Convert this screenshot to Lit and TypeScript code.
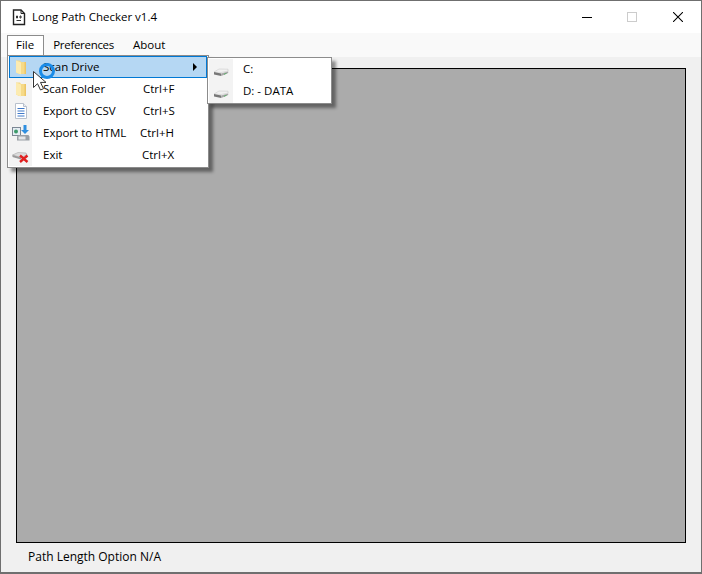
import { LitElement, html, css, svg } from "lit";
import { customElement } from "lit/decorators.js";

const folder = svg`<svg class="ic" width="16" height="16" viewBox="0 0 16 16"><path d="M3 1.500h4l1 1.500h5v12H6l-3-1.500z" fill="#f6da88"/><path d="M3 1.500l5 2V15.500l-5-2z" fill="#fcebb0"/><path d="M11.500 3H13v12h-1.500z" fill="#ecc566"/></svg>`;
const drive = svg`<svg class="ic drive" width="18" height="16" viewBox="0 0 18 16"><path d="M2 10l5-3 9 .2.200 1.800-7 1.500z" fill="#f1f1f1" stroke="#c4c4c4" stroke-width=".5"/><path d="M2 10l7.200 1.500V14L2 12.500z" fill="#777"/><path d="M9.200 11.500l7-2V11l-7 3z" fill="#a8a8a8"/><path d="M12 11.800l2.500-.8v.8l-2.500.9z" fill="#54ad62"/></svg>`;
const doc = svg`<svg class="ic" width="16" height="18" viewBox="0 0 16 18"><path d="M2.500 1.500h8l3 3v12h-11z" fill="#fff" stroke="#b8c0cc"/><path d="M10.500 1.500v3h3" fill="#e8ecf2" stroke="#b8c0cc"/><path d="M4.500 6.500h7M4.500 9h7M4.500 11.500h7M4.500 14h7" stroke="#3f78c8"/></svg>`;
const htmlIc = svg`<svg class="ic" width="18" height="18" viewBox="0 0 18 18"><rect x=".5" y="3.500" width="8" height="8" fill="#e6edf3" stroke="#7c8894"/><circle cx="4" cy="7.500" r="2" fill="#3d9a6a"/><path d="M11.500 1h3v5H17l-4 4-4-4h2.500z" fill="#2f8fe0"/><path d="M5 12.500l2-1.500h9.500l1 1.500v4H5z" fill="#9aa0a6"/><rect x="6.500" y="12.500" width="7" height="3" fill="#e4e6e8"/></svg>`;
const exitIc = svg`<svg class="ic" width="18" height="16" viewBox="0 -1 18 16"><path d="M.5 7L6 4.500l8 .5 1 2-6 2.500z" fill="#dcdcdc" stroke="#a8a8a8" stroke-width=".6"/><path d="M.5 7l8.500 2.500v2L.5 9z" fill="#9a9a9a"/><path d="M8 7.500l7.500 6.500M15.500 7.500L8 14" stroke="#e02020" stroke-width="2.400"/></svg>`;

@customElement("app-root")
export class AppRoot extends LitElement {
  static styles = css`
    :host { display: block; width: 702px; height: 574px; font: 11.5px "Open Sans", "Noto Sans", sans-serif; color: #000; }
    * { box-sizing: border-box; }
    .win { position: relative; width: 702px; height: 574px; border: 1px solid #6f6f6f; border-bottom-width: 2px; background: #f0f0f0; display: flex; flex-direction: column; overflow: hidden; }
    .title { height: 32px; background: #fff; display: flex; align-items: center; flex: none; }
    .appicon { margin-left: 11px; width: 14px; height: 17px; }
    .ttext { margin-left: 6px; flex: 1; padding-bottom: 2px; }
    .wb { width: 45px; height: 32px; display: flex; align-items: center; padding-left: 17px; }
    .wb.close { width: 46px; padding-left: 18px; }
    .menubar { height: 24px; flex: none; background: #f9f9f9; display: flex; padding-left: 6px; align-items: stretch; }
    .mi { margin-top: 2px; padding: 0 9px 4px 10px; display: flex; align-items: center; border: 1px solid transparent; border-bottom: none; }
    .mi.open { border-color: #8c8c8c; background: #fff; padding: 0 9px 4px 8px; }
    .mi.pref { padding: 0 8px 4px 8px; letter-spacing: -0.3px; }
    .mi.about { padding-left: 9px; }
    .client { flex: 1; padding: 11px 15px 0 15px; display: flex; flex-direction: column; }
    .canvas { height: 475px; background: #ababab; border: 1px solid #000; flex: none; }
    .status { font-size: 12px; padding-left: 12px; margin-top: 3px; height: 20px; display: flex; align-items: center; }
    .menu { position: absolute; background: #fff; border: 1px solid #8c8c8c; box-shadow: 4px 4px 3px rgba(0,0,0,.42); }
    .m1 { left: 6px; top: 54px; width: 202px; height: 113px; padding: 0 1px; }
    .m2 { left: 206px; top: 56px; width: 125px; height: 47px; padding: 1px; z-index: 1; }
    .row { position: relative; height: 22px; display: flex; align-items: center; background: linear-gradient(90deg, #f3f3f3 0 23px, transparent 23px); }
    .row.sel { background: #b5d7f3; outline: 1px solid #0078d4; outline-offset: -1px; }
    .icell { width: 23px; flex: none; display: flex; justify-content: center; align-items: center; }
    .lbl { margin-left: 11px; flex: none; padding-bottom: 2px; }
    .key { white-space: nowrap; padding-bottom: 2px; }
    .arrow { position: absolute; right: 10px; top: 7px; width: 0; height: 0; border-left: 4px solid #000; border-top: 4px solid transparent; border-bottom: 4px solid transparent; }
    .m2 .row { background: linear-gradient(90deg, #f3f3f3 0 24px, transparent 24px); }
    .m2 .icell { width: 24px; }
    .m2 .lbl { margin-left: 10px; padding-bottom: 4px; }
    .ic { display: block; }
    .cursor { position: absolute; left: 31px; top: 61px; pointer-events: none; z-index: 2; }
  `;

  row(icon: unknown, label: string, key = "", keyGap = 0, sel = false) {
    return html`<div class="row ${sel ? "sel" : ""}">
      <div class="icell">${icon}</div>
      <div class="lbl" style="width:${100 - keyGap}px">${label}</div>
      <div class="key">${key}</div>
      ${sel ? html`<div class="arrow"></div>` : ""}
    </div>`;
  }

  render() {
    return html`<div class="win">
      <div class="title">
        <svg class="appicon" viewBox="0 0 14 17"><path d="M1.500 1h7.500l3.500 3.500V15.500H1.500z" fill="#fff" stroke="#222" stroke-width="1.400"/><path d="M9 1v3.500h3.500" fill="none" stroke="#222"/><path d="M4.500 7h1v2h-1zM8 7h1v2H8zM4.500 11.500h4.500" stroke="#333" fill="none"/></svg>
        <div class="ttext">Long Path Checker v1.4</div>
        <div class="wb"><svg width="10" height="10" viewBox="0 0 10 10"><path d="M0 5.500h10" stroke="#000"/></svg></div>
        <div class="wb"><svg width="10" height="10" viewBox="0 0 10 10"><rect x=".5" y=".5" width="9" height="9" fill="none" stroke="#ccc"/></svg></div>
        <div class="wb close"><svg width="10" height="10" viewBox="0 0 10 10"><path d="M0 0l10 10M10 0L0 10" stroke="#000" stroke-width="1.050"/></svg></div>
      </div>
      <div class="menubar">
        <div class="mi open">File</div>
        <div class="mi pref">Preferences</div>
        <div class="mi about">About</div>
      </div>
      <div class="client">
        <div class="canvas"></div>
        <div class="status">Path Length Option N/A</div>
      </div>
      <div class="menu m1">
        ${this.row(folder, "Scan Drive", "", 0, true)}
        ${this.row(folder, "Scan Folder", "Ctrl+F")}
        ${this.row(doc, "Export to CSV", "Ctrl+S")}
        ${this.row(htmlIc, "Export to HTML", "Ctrl+H", 3)}
        ${this.row(exitIc, "Exit", "Ctrl+X", 1)}
      </div>
      <div class="menu m2">
        ${this.row(drive, "C:")}
        ${this.row(drive, "D: - DATA")}
      </div>
      <svg class="cursor" width="26" height="30" viewBox="0 0 26 30">
        <path d="M1.500 9.500V25.500l4-3.800 3 6.300 3-1.300-3-6.300h5.500z" fill="#fff" stroke="#333"/>
        <circle cx="15" cy="9" r="6.500" fill="none" stroke="#1a8ce8" stroke-width="3"/>
      </svg>
    </div>`;
  }
}
